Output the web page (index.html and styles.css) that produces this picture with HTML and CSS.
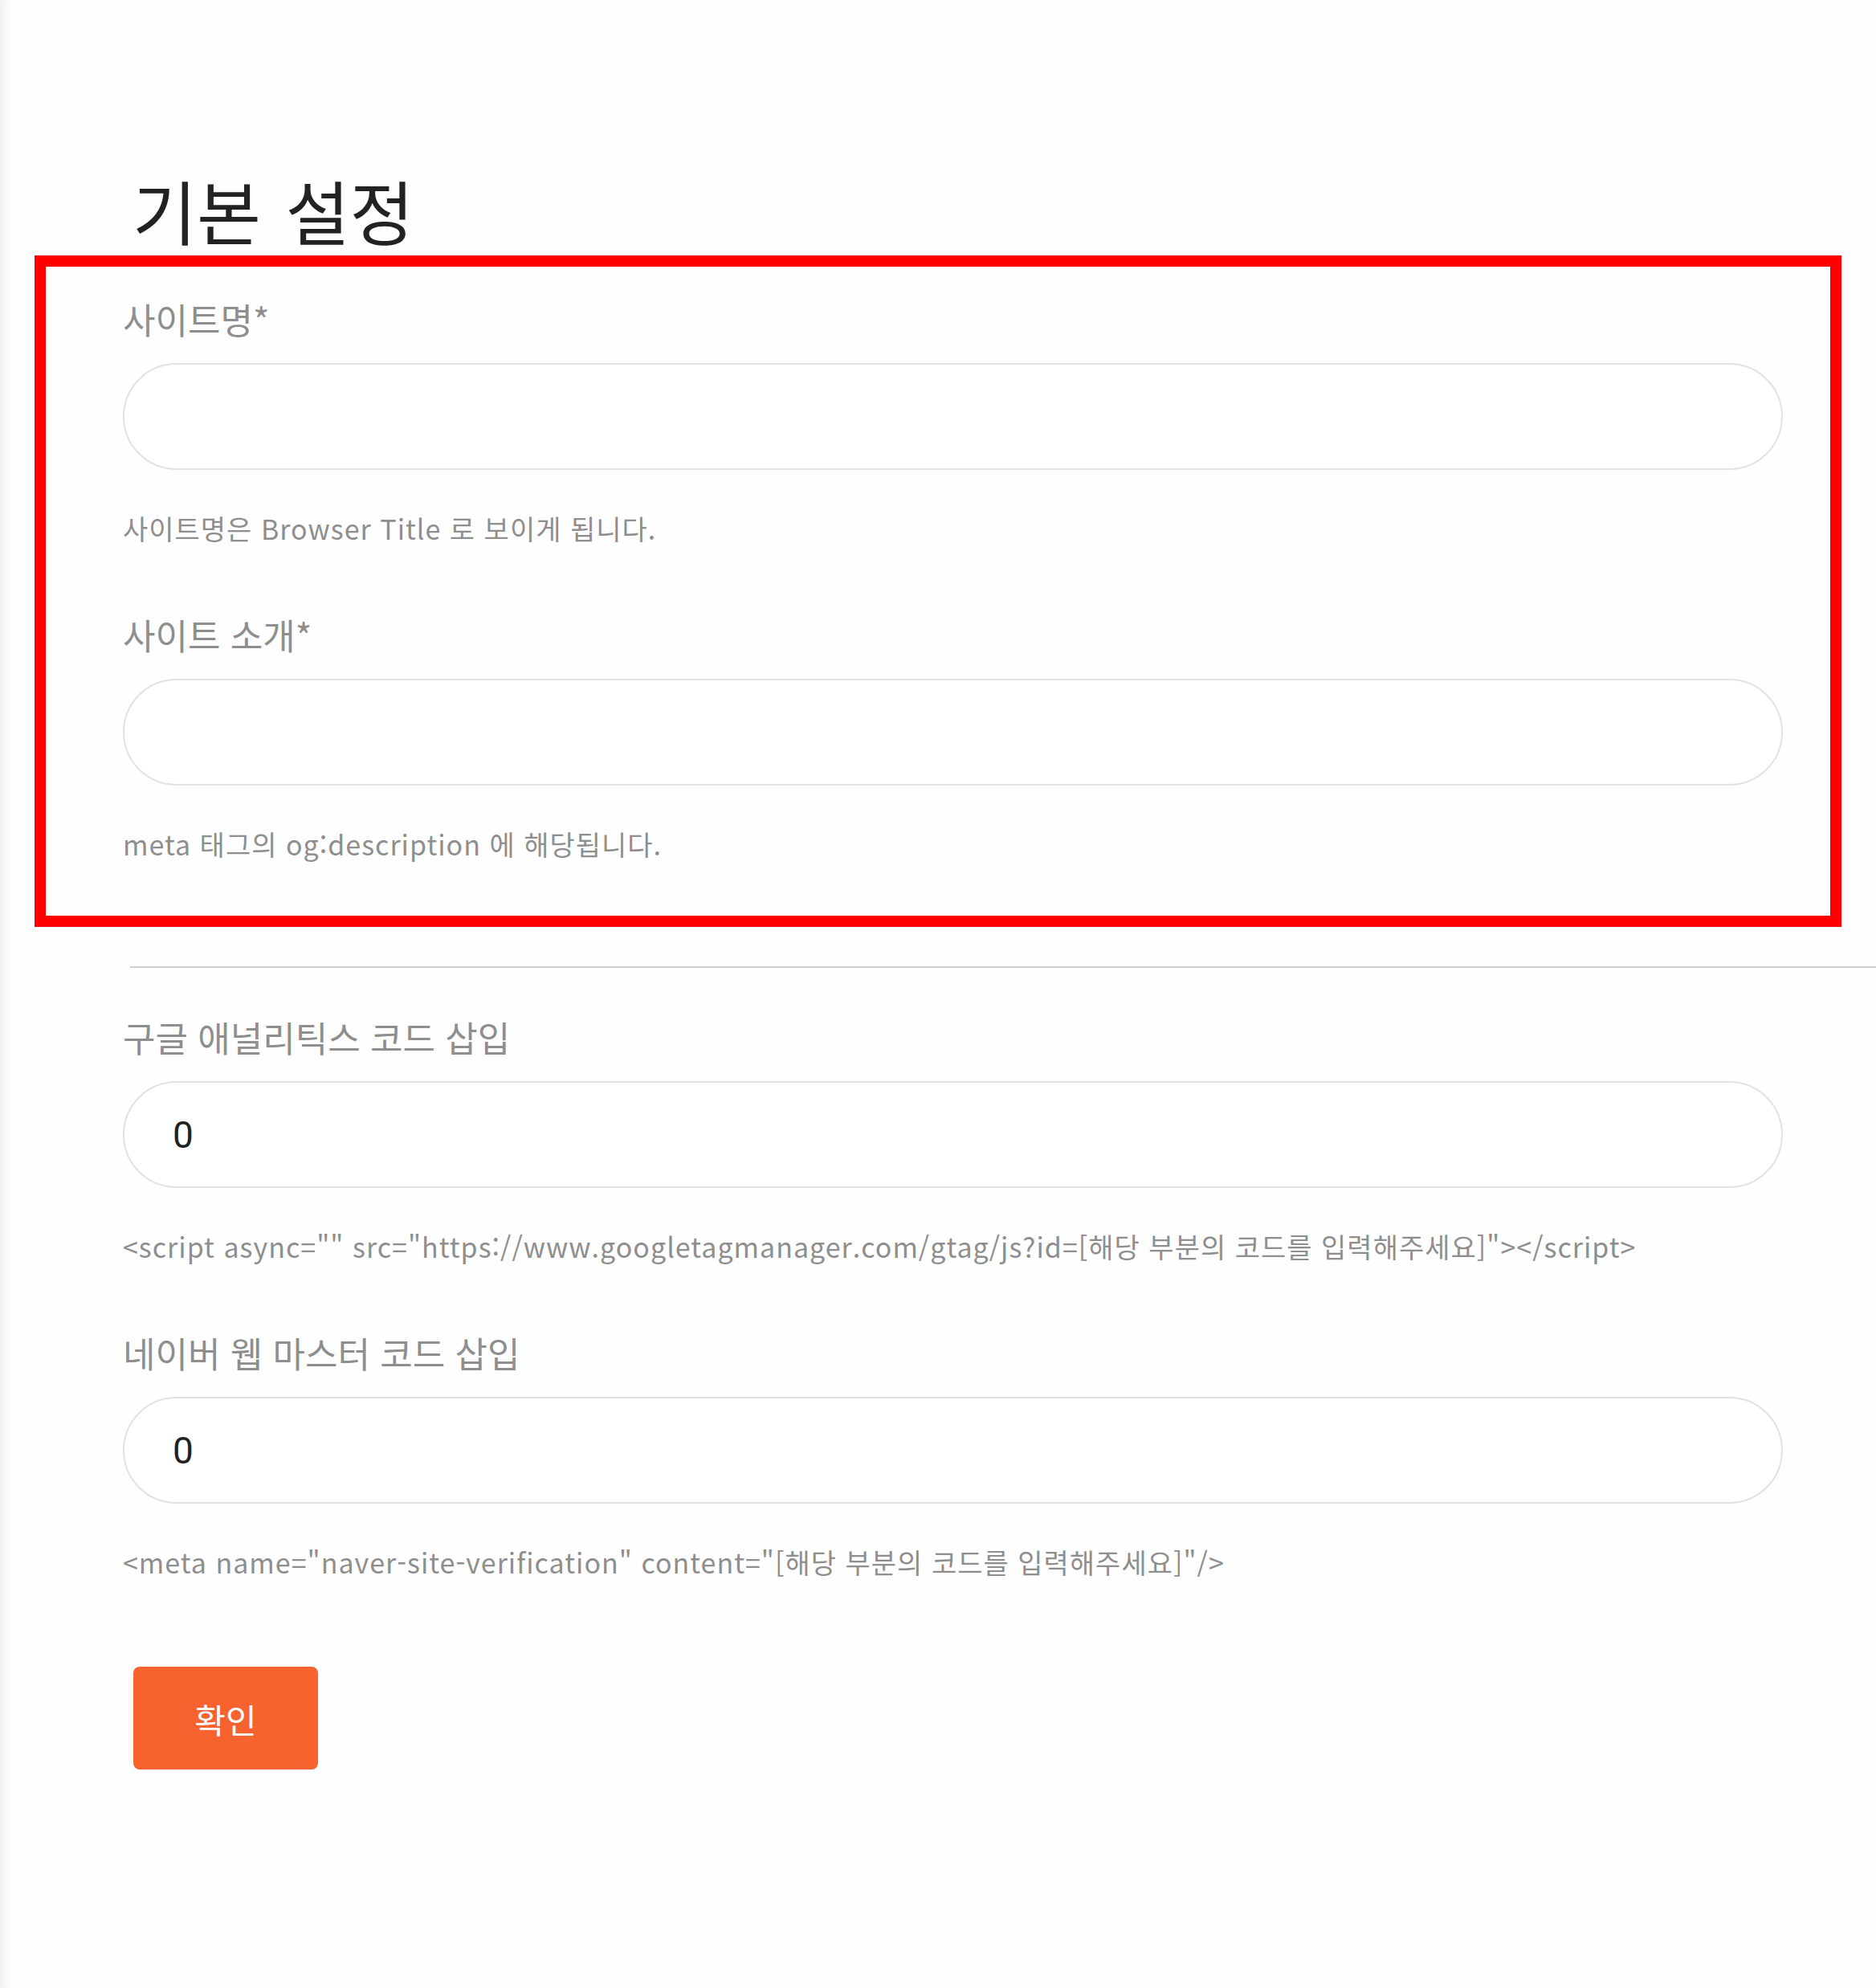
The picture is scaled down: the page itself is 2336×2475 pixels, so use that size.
FILE: index.html
```html
<!DOCTYPE html>
<html lang="ko">
<head>
<meta charset="utf-8">
<meta name="viewport" content="width=device-width, initial-scale=1">
<title>기본 설정</title>
<link rel="stylesheet" href="styles.css">
</head>
<body>
<div class="page">
<h1 class="page-title">기본 설정</h1>
<form class="settings">
    <div class="highlight">
        <div class="field">
            <label for="siteName">사이트명*</label>
            <input type="text" id="siteName" name="siteName" class="text-input">
            <p class="help">사이트명은 Browser Title 로 보이게 됩니다.</p>
        </div>
        <div class="field">
            <label for="siteDesc">사이트 소개*</label>
            <input type="text" id="siteDesc" name="siteDesc" class="text-input">
            <p class="help">meta 태그의 og:description 에 해당됩니다.</p>
        </div>
    </div>
    <hr class="divider">
    <div class="field">
        <label for="gaCode">구글 애널리틱스 코드 삽입</label>
        <input type="text" id="gaCode" name="gaCode" class="text-input" value="0">
        <p class="help">&lt;script async="" src="https://www.googletagmanager.com/gtag/js?id=[해당 부분의 코드를 입력해주세요]"&gt;&lt;/script&gt;</p>
    </div>
    <div class="field">
        <label for="naverCode">네이버 웹 마스터 코드 삽입</label>
        <input type="text" id="naverCode" name="naverCode" class="text-input" value="0">
        <p class="help">&lt;meta name="naver-site-verification" content="[해당 부분의 코드를 입력해주세요]"/&gt;</p>
    </div>
    <button type="submit" class="btn-submit">확인</button>
</form>
</div>
</body>
</html>
```

FILE: styles.css
```css
html, body {
	margin: 0;
	background: #fefefe;
	overflow-x: hidden;
}
body {
	font-family: "Noto Sans CJK KR", "Noto Sans", sans-serif;
	box-shadow: inset 14px 0 14px -10px rgba(0,0,0,0.07);
	min-height: 2475px;
}
.page {
	padding: 211px 116px 200px 153px;
}
.page-title {
	margin: 0 0 7px 12px;
	font-size: 87px;
	line-height: 100px;
	font-weight: 400;
	color: #222;
	word-spacing: 6px;
}
.highlight {
	border: 14px solid #ff0000;
	margin: 0 -73px 0 -110px;
	padding: 35px 59px 65px 96px;
}
.field {
	display: flex;
	flex-direction: column;
}
.field + .field {
	margin-top: 78px;
}
.field label {
	font-size: 44px;
	line-height: 60px;
	color: #8e8e8e;
	margin-bottom: 25px;
}
.text-input {
	box-sizing: border-box;
	height: 133px;
	width: 100%;
	border: 2px solid #e2e2e2;
	border-radius: 67px;
	background: #fff;
	padding: 0 60px;
	font-family: Roboto, "Noto Sans CJK KR", sans-serif;
	font-size: 46px;
	color: #222;
	outline: none;
}
.help {
	margin: 49px 0 0;
	font-size: 34px;
	line-height: 48px;
	letter-spacing: 1px;
	color: #8e8e8e;
	white-space: nowrap;
}
.divider {
	border: none;
	border-top: 2px solid #cfcfcf;
	margin: 49px -116px 56px 9px;
}
.btn-submit {
	display: block;
	margin: 106px 0 0 13px;
	width: 230px;
	height: 128px;
	border: none;
	border-radius: 8px;
	background: #f8622f;
	color: #fff;
	font-family: "Noto Sans CJK KR", sans-serif;
	font-size: 42px;
	cursor: pointer;
}
```
